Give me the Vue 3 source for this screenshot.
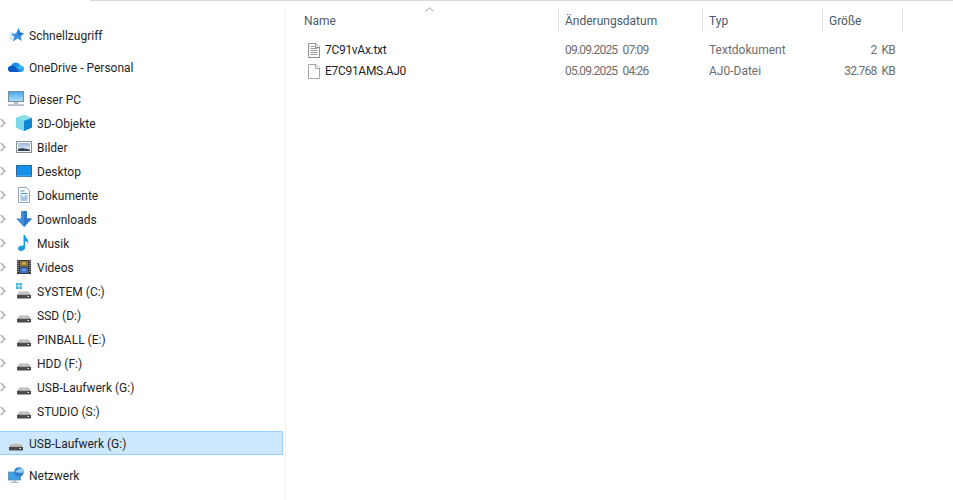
<script setup>
const groups = [
  [{ label: 'Schnellzugriff', icon: 'star' }],
  [{ label: 'OneDrive - Personal', icon: 'cloud' }],
  [
    { label: 'Dieser PC', icon: 'pc' },
    { label: '3D-Objekte', icon: 'cube', child: true },
    { label: 'Bilder', icon: 'pics', child: true },
    { label: 'Desktop', icon: 'desk', child: true },
    { label: 'Dokumente', icon: 'docs', child: true },
    { label: 'Downloads', icon: 'down', child: true },
    { label: 'Musik', icon: 'music', child: true },
    { label: 'Videos', icon: 'video', child: true },
    { label: 'SYSTEM (C:)', icon: 'sys', child: true },
    { label: 'SSD (D:)', icon: 'drive', child: true },
    { label: 'PINBALL (E:)', icon: 'drive', child: true },
    { label: 'HDD (F:)', icon: 'drive', child: true },
    { label: 'USB-Laufwerk (G:)', icon: 'drive', child: true },
    { label: 'STUDIO (S:)', icon: 'drive', child: true }
  ],
  [{ label: 'USB-Laufwerk (G:)', icon: 'drive', selected: true }],
  [{ label: 'Netzwerk', icon: 'net' }]
]
const files = [
  { name: '7C91vAx.txt', icon: 'txt', date: '09.09.2025 07:09', type: 'Textdokument', size: '2 KB' },
  { name: 'E7C91AMS.AJ0', icon: 'blank', date: '05.09.2025 04:26', type: 'AJ0-Datei', size: '32.768 KB' }
]
</script>

<template>
  <div class="window">
    <svg class="defs" width="0" height="0" aria-hidden="true">
      <defs>
        <linearGradient id="screen" x1="0" y1="0" x2="0" y2="1">
          <stop offset="0" stop-color="#3fa6ec" />
          <stop offset="1" stop-color="#b4e2fb" />
        </linearGradient>
        <linearGradient id="sky" x1="0" y1="0" x2="0" y2="1">
          <stop offset="0" stop-color="#9db8d8" />
          <stop offset="1" stop-color="#eef2f7" />
        </linearGradient>
        <linearGradient id="drivetop" x1="0" y1="0" x2="0" y2="1">
          <stop offset="0" stop-color="#dcdcdc" />
          <stop offset="1" stop-color="#a9a9a9" />
        </linearGradient>
        <symbol id="i-star" viewBox="0 0 16 16">
          <path d="M10.500 1 12 5.600 16 6.200 13 9.200 13.600 14 9.600 11.600 5 14.600 6.200 9.800 3.400 7.200 8 6.200Z" fill="#3f8fdc" />
          <path d="M10.500 1 12 5.600 16 6.200 10.500 8.500Z" fill="#1d6fc2" />
          <path d="M2.200 6.200h3.600M1.400 9h3.400M2.400 11.800h2.600" stroke="#8fc4ee" stroke-width="1" fill="none" />
        </symbol>
        <symbol id="i-cloud" viewBox="0 0 16 16">
          <path d="M3.400 13C1.400 13 0 11.700 0 10c0-1.600 1.200-2.900 2.800-3C3.600 4.800 5.500 3.400 7.700 3.400c2 0 3.700 1.100 4.500 2.900C14.400 6.500 16 8 16 10c0 1.700-1.400 3-3.200 3Z" fill="#1f8fe6" />
          <path d="M3.400 13C1.400 13 0 11.700 0 10c0-1.600 1.200-2.900 2.800-3 1.800-.6 3.600 0 4.900 1.300L11 13Z" fill="#0c59c4" />
          <path d="M12.200 6.300C14.400 6.500 16 8 16 10c0 .8-.3 1.400-.7 2L9 8.400c.8-1.400 1.900-2.200 3.200-2.100Z" fill="#35b8f1" />
        </symbol>
        <symbol id="i-pc" viewBox="0 0 16 16">
          <rect x="0.500" y="0.500" width="15" height="10" fill="url(#screen)" stroke="#7d8b99" />
          <rect x="6" y="11" width="4" height="2" fill="#b5bdc4" />
          <rect x="0" y="13.500" width="16" height="1.200" fill="#8d9aa6" />
        </symbol>
        <symbol id="i-cube" viewBox="0 0 16 16">
          <path d="M8 0 16 3V12.500L8 16 0 12.500V3Z" fill="#49bfe0" />
          <path d="M8 0 16 3 8 6 0 3Z" fill="#8be2e9" />
          <path d="M0 3 8 6V16L0 12.500Z" fill="#7cd8e8" />
          <path d="M8 6 16 3V12.500L8 16Z" fill="#0b87d6" />
        </symbol>
        <symbol id="i-pics" viewBox="0 0 16 16">
          <rect x="0.500" y="2.500" width="15" height="11" fill="#f6f6f6" stroke="#8a8f95" />
          <rect x="2" y="4" width="12" height="8" fill="url(#sky)" />
          <path d="M2 10C5 8.800 8 9.200 14 10.800V12H2Z" fill="#2f435c" />
        </symbol>
        <symbol id="i-desk" viewBox="0 0 16 16">
          <rect x="0.500" y="2.500" width="15" height="11" fill="#1590ea" stroke="#2a6aa3" />
          <path d="M1.500 13h13" stroke="#e6f3fc" stroke-width="1" stroke-dasharray="1 1.500" />
        </symbol>
        <symbol id="i-docs" viewBox="0 0 16 16">
          <path d="M2.500 .5H10.500L13.500 3.500V15.500H2.500Z" fill="#fbfcfd" stroke="#9aa3ab" />
          <path d="M4.500 4h4M4.500 6.500h7M4.500 9h2.500M8.500 9h3M4.500 11h7M4.500 13h7" stroke="#4e93c8" stroke-width="1" />
        </symbol>
        <symbol id="i-down" viewBox="0 0 16 16">
          <path d="M5 0H11V7.500H16L8 16 0 7.500H5Z" fill="#3d8fdb" />
          <path d="M8 0H11V7.500H16L8 16Z" fill="#2b78c4" />
        </symbol>
        <symbol id="i-music" viewBox="0 0 16 16">
          <path d="M7.500 0H9C9.200 2.800 13.500 4.400 12 9.200 11.900 7.500 10.800 6.400 9.200 6V12.800C9.200 14.800 7 16 4.900 16 3.200 16 2 15 2 13.600 2 11.600 4.300 10.400 6.200 10.400 6.800 10.400 7.200 10.500 7.500 10.700Z" fill="#1c9be2" />
        </symbol>
        <symbol id="i-video" viewBox="0 0 16 16">
          <rect x="1" y="1" width="14" height="14" fill="#3d3d3d" />
          <path d="M2 2v12M14 2v12" stroke="#cfcfcf" stroke-width="1" stroke-dasharray="1 1" />
          <rect x="4" y="2" width="8" height="5.500" fill="#8a7a3e" />
          <rect x="4" y="8.500" width="8" height="5.500" fill="#3f6cc4" />
          <rect x="6" y="3.500" width="4" height="2" fill="#d0a94a" />
          <rect x="6" y="10" width="4" height="2" fill="#6f96dc" />
        </symbol>
        <symbol id="i-drive" viewBox="0 0 16 16">
          <path d="M3.500 8H12.500L15 12H1Z" fill="url(#drivetop)" />
          <rect x="1" y="12" width="14" height="3.500" fill="#4a4a4a" />
          <rect x="11.500" y="13" width="1.500" height="1" fill="#e8e8e8" />
        </symbol>
        <symbol id="i-sys" viewBox="0 0 16 16">
          <path d="M0 0H2.600V2.600H0ZM3.300 0H5.900V2.600H3.300ZM0 3.300H2.600V5.900H0ZM3.300 3.300H5.900V5.900H3.300Z" fill="#38b4dc" />
          <path d="M3.500 8H12.500L15 12H1Z" fill="url(#drivetop)" />
          <rect x="1" y="12" width="14" height="3.500" fill="#4a4a4a" />
          <rect x="11.500" y="13" width="1.500" height="1" fill="#e8e8e8" />
        </symbol>
        <symbol id="i-net" viewBox="0 0 16 16">
          <rect x="0.500" y="5" width="12" height="8" fill="#3ba1e6" stroke="#5b8cb3" stroke-width="0.800" />
          <path d="M5 13.500h3.500v1H5ZM2.500 15h8v.7h-8Z" fill="#8aa4b8" />
          <circle cx="11" cy="5" r="4.800" fill="#2f7fcc" />
          <path d="M7 5c2-2 4-3.500 6.500-4 1.500 1 2.300 2.500 2.300 4-2 1.200-5 1-8.800 0Z" fill="#8fd0f2" />
        </symbol>
        <symbol id="i-blank" viewBox="0 0 16 16">
          <path d="M2.500 1.500H10L13.500 5V15.500H2.500Z" fill="#fff" stroke="#a8a8a8" />
          <path d="M9.500 1.500V5.500H13.500" fill="#f2f2f2" stroke="#a8a8a8" />
        </symbol>
        <symbol id="i-txt" viewBox="0 0 16 16">
          <path d="M2.500 1.500H10L13.500 5V15.500H2.500Z" fill="#fff" stroke="#8f8f8f" />
          <path d="M9.500 1.500V5.500H13.500" fill="#f2f2f2" stroke="#8f8f8f" />
          <path d="M4.500 4.500h4M4.500 6.500h7M4.500 8.500h7M4.500 10.500h7M4.500 12.500h7" stroke="#9a9a9a" stroke-width="1" />
        </symbol>
      </defs>
    </svg>

    <div class="topline"></div>

    <div class="panes">
      <nav class="sidebar">
        <ul v-for="(group, g) in groups" :key="g" class="group">
          <li
            v-for="item in group"
            :key="item.label + g"
            class="row"
            :class="{ child: item.child, selected: item.selected }"
          >
            <svg v-if="item.child" class="chev" width="16" height="16" viewBox="0 0 16 16">
              <path d="M.8 4 4.800 8 .8 12" fill="none" stroke="#b0b0b0" stroke-width="1.600" />
            </svg>
            <svg class="icon" width="16" height="16"><use :href="'#i-' + item.icon" /></svg>
            <span class="label">{{ item.label }}</span>
          </li>
        </ul>
      </nav>

      <main class="list">
        <div class="table">
          <div class="head name"><span class="label">Name</span><svg class="sort" width="9" height="5" viewBox="0 0 9 5"><path d="M.5 4.500 4.500 .7 8.500 4.500" fill="none" stroke="#a0a0a0" /></svg></div>
          <div class="head"><span class="label">Änderungsdatum</span></div>
          <div class="head"><span class="label">Typ</span></div>
          <div class="head"><span class="label">Größe</span></div>
          <template v-for="file in files" :key="file.name">
            <div class="cell filename">
              <svg class="icon" width="16" height="16"><use :href="'#i-' + file.icon" /></svg>
              <span>{{ file.name }}</span>
            </div>
            <div class="cell muted digits"><span>{{ file.date }}</span></div>
            <div class="cell muted"><span>{{ file.type }}</span></div>
            <div class="cell muted digits size"><span>{{ file.size }}</span></div>
          </template>
        </div>
      </main>
    </div>
  </div>
</template>

<style>
html, body { margin: 0; background: #fff; }
</style>

<style scoped>
.window {
  width: 953px;
  height: 500px;
  display: flex;
  flex-direction: column;
  overflow: hidden;
  font-family: Roboto, "Noto Sans", sans-serif;
  font-size: 12px;
  color: #1f1f1f;
  background: #fff;
}
.defs { display: block; }
.topline {
  height: 1px;
  margin-left: 90px;
  background: #d9d9d9;
  flex: none;
}
.panes {
  flex: 1;
  display: flex;
  margin-top: 7px;
  min-height: 0;
}
.sidebar {
  width: 285px;
  border-right: 1px solid #f0f0f0;
  padding-top: 15px;
  display: flex;
  flex-direction: column;
  gap: 8px;
  flex: none;
}
.group { list-style: none; margin: 0; padding: 0; }
.label { padding-top: 2px; }
.row {
  height: 24px;
  display: flex;
  align-items: center;
  padding-left: 8px;
  box-sizing: border-box;
  white-space: nowrap;
}
.row.child { padding-left: 0; }
.chev { flex: none; }
.icon { flex: none; margin-right: 5px; }
.row.selected {
  width: 283px;
  background: #cce8ff;
  border: 1px solid #99d1ff;
  border-left: none;
}
.list { flex: 1; padding-left: 12px; min-width: 0; }
.table {
  display: grid;
  grid-template-columns: 261px 144px 120px 80px;
  grid-template-rows: 24px 21px 21px;
}
.head {
  position: relative;
  display: flex;
  align-items: center;
  padding-left: 6px;
  border-right: 1px solid #e5e5e5;
  color: #4c5a6a;
}
.sort { position: absolute; left: 127px; top: -1px; }
.cell {
  display: flex;
  align-items: center;
  padding-left: 6px;
  margin-top: 7px;
  margin-bottom: -7px;
  white-space: nowrap;
}
.filename { padding-left: 8px; letter-spacing: -0.3px; }
.filename .icon { margin-right: 3px; }
.muted { color: #6d6d6d; }
.digits { letter-spacing: -0.8px; word-spacing: 3px; }
.size { justify-content: flex-end; padding-right: 8px; }
</style>
